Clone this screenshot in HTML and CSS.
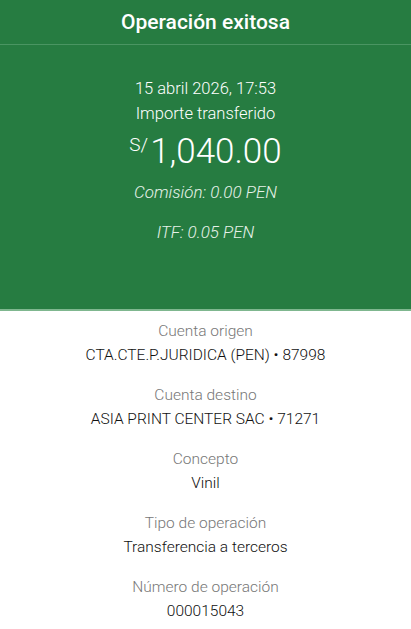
FILE: index.html
```html
<!DOCTYPE html>
<html lang="es">
<head>
  <meta charset="UTF-8">
  <title>Operación exitosa</title>
  <link rel="stylesheet" href="styles.css">
</head>
<body>
  <div class="receipt">
    <div class="top">
      <div class="title">Operación exitosa</div>
      <div class="summary">
        <div class="date">15 abril 2026, 17:53</div>
        <div class="caption">Importe transferido</div>
        <div class="amount"><span class="currency">S/</span>1,040.00</div>
        <div class="fee fee-first">Comisión: 0.00 PEN</div>
        <div class="fee">ITF: 0.05 PEN</div>
      </div>
    </div>
    <div class="details">
      <div class="item">
        <div class="label">Cuenta origen</div>
        <div class="value">CTA.CTE.P.JURIDICA (PEN) • 87998</div>
      </div>
      <div class="item">
        <div class="label">Cuenta destino</div>
        <div class="value">ASIA PRINT CENTER SAC • 71271</div>
      </div>
      <div class="item">
        <div class="label">Concepto</div>
        <div class="value">Vinil</div>
      </div>
      <div class="item">
        <div class="label">Tipo de operación</div>
        <div class="value">Transferencia a terceros</div>
      </div>
      <div class="item">
        <div class="label">Número de operación</div>
        <div class="value">000015043</div>
      </div>
    </div>
  </div>
</body>
</html>
```

FILE: styles.css
```css
/* reset */
* { box-sizing: border-box; margin: 0; padding: 0; }
body {
  font-family: Roboto, "Liberation Sans", Arial, sans-serif;
  background: #fff;
  color: #222;
}
.receipt {
  width: 411px;
  min-height: 629px;
  border-bottom: 2px solid #d4d4d4;
}
/* green block */
.top {
  background: #267c41;
  color: #fff;
  border-bottom: 2px solid #7fb78f;
}
.title {
  height: 45px;
  line-height: 45px;
  text-align: center;
  font-size: 21px;
  font-weight: 500;
  border-bottom: 1px solid #4a9562;
}
.summary {
  text-align: center;
  padding: 31px 0 0;
  height: 264px;
}
.date, .caption {
  font-size: 16.5px;
  font-weight: 300;
  line-height: 25px;
}
.amount {
  font-size: 35px;
  font-weight: 300;
  line-height: 38px;
}
.currency {
  font-size: 19px;
  vertical-align: 12px;
  margin-right: 2px;
}
.fee {
  font-size: 17px;
  font-style: italic;
  font-weight: 300;
  line-height: 20px;
  color: #e6f2e9;
  margin-top: 20px;
}
.fee-first { margin-top: 11px; }
/* details */
.details {
  text-align: center;
  padding-top: 8px;
}
.item {
  height: 64px;
}
.label {
  font-size: 15.5px;
  color: #777;
  line-height: 24px;
  font-weight: 300;
}
.value {
  font-size: 15.5px;
  line-height: 24px;
  font-weight: 300;
  color: #111;
}
```
